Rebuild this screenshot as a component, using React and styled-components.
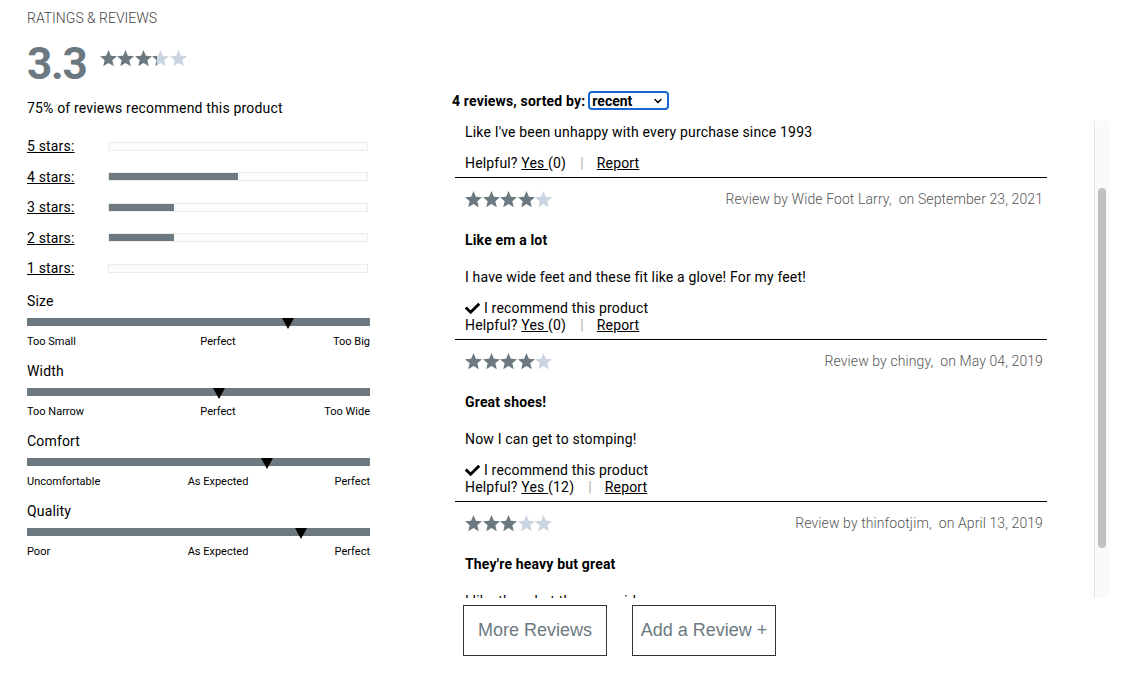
import React, { useId, useLayoutEffect, useRef, useState } from "react";
import styled, { createGlobalStyle } from "styled-components";
import { FaCheck } from "react-icons/fa";
import { ChevronDown } from "lucide-react";

const SLATE = "#6c7981";
const LIGHT = "#cbd4e1";

const GlobalStyle = createGlobalStyle`
  body {
    margin: 0;
    background: #fff;
    font-family: Roboto, "Liberation Sans", sans-serif;
    letter-spacing: 0.17px;
    color: #000;
  }
`;

const Page = styled.div`
  display: flex;
  align-items: flex-start;
  padding: 10px 0 0 27px;
  gap: 82px;
`;

const LeftCol = styled.div`
  width: 343px;
  display: flex;
  flex-direction: column;
`;

const Heading = styled.div`
  font-size: 14px;
  font-weight: 300;
  line-height: 17px;
  letter-spacing: 0;
  color: #444;
`;

const RatingRow = styled.div`
  display: flex;
  align-items: flex-start;
  margin-top: 14px;
`;

const BigNumber = styled.div`
  font-size: 44px;
  font-weight: 700;
  line-height: 46px;
  letter-spacing: -1.2px;
  color: ${SLATE};
`;

const StarRow = styled.div`
  display: flex;
  gap: ${(p) => p.$gap}px;
  margin: ${(p) => p.$margin || 0};
`;

const Text = styled.div`
  font-size: 14px;
  line-height: 17px;
  margin-top: ${(p) => p.$top || 0}px;
`;

const Breakdown = styled.div`
  display: flex;
  flex-direction: column;
  gap: 13.5px;
  margin-top: 21px;
`;

const BreakdownRow = styled.div`
  display: flex;
  align-items: center;
  height: 17px;
`;

const StarLink = styled.span`
  width: 81px;
  font-size: 14px;
  text-decoration: underline;
`;

const Bar = styled.div`
  width: 260px;
  height: 9px;
  box-sizing: border-box;
  border: 1px solid #ececec;
  background: #fcfcfc;
  display: flex;
`;

const BarFill = styled.div`
  height: 100%;
  background: ${SLATE};
`;

const Factors = styled.div`
  display: flex;
  flex-direction: column;
  gap: 15px;
  margin-top: 16px;
`;

const Factor = styled.div`
  display: flex;
  flex-direction: column;
`;

const FactorTrack = styled.div`
  position: relative;
  height: 8px;
  background: ${SLATE};
  margin-top: 8.5px;
`;

const Marker = styled.div`
  position: absolute;
  top: 0;
  width: 0;
  height: 0;
  transform: translateX(-6px);
  border-left: 6px solid transparent;
  border-right: 6px solid transparent;
  border-top: 11px solid #000;
`;

const FactorLabels = styled.div`
  display: grid;
  grid-template-columns: 120px 1fr 81px;
  margin-top: 8.5px;
  font-size: 11px;
  line-height: 13px;
  letter-spacing: 0;
  span:nth-child(2) { text-align: center; }
  span:nth-child(3) { text-align: right; }
`;

const RightCol = styled.div`
  width: 657px;
  padding-top: 81px;
  display: flex;
  flex-direction: column;
`;

const SortBar = styled.div`
  display: flex;
  align-items: center;
  height: 19px;
  font-size: 14px;
  font-weight: 700;
  gap: 3px;
`;

const SelectWrap = styled.div`
  position: relative;
  width: 81px;
  height: 19px;
`;

const Select = styled.select`
  appearance: none;
  width: 100%;
  height: 100%;
  box-sizing: border-box;
  border: 2px solid #1a66d3;
  border-radius: 4px;
  padding: 0 0 0 2px;
  background: #fff;
  font-family: Roboto, sans-serif;
  font-size: 14px;
  font-weight: 700;
  color: #000;
  outline: none;
`;

const Chevron = styled(ChevronDown)`
  position: absolute;
  right: 5px;
  top: 4px;
  pointer-events: none;
`;

const ListFrame = styled.div`
  display: flex;
  margin: 11px 0 0 3px;
  width: 654px;
  height: 477px;
`;

const ScrollArea = styled.div`
  flex: 1;
  height: 100%;
  overflow-y: scroll;
  scrollbar-width: none;
  &::-webkit-scrollbar { display: none; }
`;

const Track = styled.div`
  width: 15px;
  height: 100%;
  box-sizing: border-box;
  background: #fafafa;
  border-left: 1px solid #e6e6e6;
  padding: 0 3px 0 3px;
`;

const Thumb = styled.div`
  width: 8px;
  border-radius: 4px;
  background: #c1c1c1;
`;

const ReviewItem = styled.div`
  width: 592px;
  box-sizing: border-box;
  padding: 13px 4px 5px 10px;
  border-bottom: 1px solid #000;
  font-size: 14px;
  line-height: 17px;
`;

const ReviewTop = styled.div`
  display: flex;
  justify-content: space-between;
  align-items: center;
  height: 17px;
`;

const Reviewer = styled.span`
  font-weight: 300;
  color: #555;
  white-space: pre;
  letter-spacing: 0.1px;
`;

const Title = styled.div`
  font-weight: 700;
  margin-top: 24px;
`;

const Body = styled.div`
  margin-top: 20px;
`;

const Recommend = styled.div`
  display: flex;
  align-items: center;
  gap: 4px;
  margin-top: 14px;
`;

const Helpful = styled.div`
  margin-top: ${(p) => (p.$afterRecommend ? 0 : 14)}px;
`;

const U = styled.span`
  text-decoration: underline;
  white-space: pre;
`;

const Sep = styled.span`
  color: #aaa;
  margin: 0 13px 0 14px;
`;

const Buttons = styled.div`
  display: flex;
  gap: 25px;
  margin: 7px 0 0 11px;
`;

const Button = styled.button`
  width: 144px;
  height: 51px;
  background: #fff;
  border: 1px solid #333;
  font-family: "Liberation Sans", Arial, sans-serif;
  font-size: 18px;
  letter-spacing: 0;
  color: ${SLATE};
  padding: 0;
  cursor: pointer;
`;

const STAR_PATH =
  "M12 17.27L18.18 21l-1.64-7.03L22 9.24l-7.19-.61L12 2 9.19 8.63 2 9.24l5.46 4.73L5.82 21z";

const Stars = ({ rating, gap = 0.6, margin }) => {
  const id = useId().replace(/[^a-zA-Z0-9]/g, "");
  return (
    <StarRow $gap={gap} $margin={margin}>
      {[0, 1, 2, 3, 4].map((i) => {
        const f = Math.max(0, Math.min(1, rating - i));
        return (
          <svg key={i} width="17" height="16.2" viewBox="2 2 20 19">
            <defs>
              <linearGradient id={`${id}s${i}`}>
                <stop offset={f} stopColor={SLATE} />
                <stop offset={f} stopColor={LIGHT} />
              </linearGradient>
            </defs>
            <path d={STAR_PATH} fill={`url(#${id}s${i})`} />
          </svg>
        );
      })}
    </StarRow>
  );
};

const breakdown = [
  { stars: 5, pct: 0 },
  { stars: 4, pct: 50 },
  { stars: 3, pct: 25 },
  { stars: 2, pct: 25 },
  { stars: 1, pct: 0 },
];

const factors = [
  { name: "Size", pos: 76, labels: ["Too Small", "Perfect", "Too Big"] },
  { name: "Width", pos: 56, labels: ["Too Narrow", "Perfect", "Too Wide"] },
  { name: "Comfort", pos: 70, labels: ["Uncomfortable", "As Expected", "Perfect"] },
  { name: "Quality", pos: 80, labels: ["Poor", "As Expected", "Perfect"] },
];

const reviews = [
  {
    rating: 2,
    name: "grumpyguy",
    date: "January 12, 2022",
    title: "Not for me",
    body: "Like I've been unhappy with every purchase since 1993",
    recommend: false,
    helpful: 0,
  },
  {
    rating: 4,
    name: "Wide Foot Larry",
    date: "September 23, 2021",
    title: "Like em a lot",
    body: "I have wide feet and these fit like a glove! For my feet!",
    recommend: true,
    helpful: 0,
  },
  {
    rating: 4,
    name: "chingy",
    date: "May 04, 2019",
    title: "Great shoes!",
    body: "Now I can get to stomping!",
    recommend: true,
    helpful: 12,
  },
  {
    rating: 3,
    name: "thinfootjim",
    date: "April 13, 2019",
    title: "They're heavy but great",
    body: "I like them but they run wide",
    recommend: true,
    helpful: 3,
  },
];

const Review = ({ r }) => (
  <ReviewItem>
    <ReviewTop>
      <Stars rating={r.rating} />
      <Reviewer>{`Review by ${r.name},  on ${r.date}`}</Reviewer>
    </ReviewTop>
    <Title>{r.title}</Title>
    <Body>{r.body}</Body>
    {r.recommend && (
      <Recommend>
        <FaCheck size={15} />
        <span>I recommend this product</span>
      </Recommend>
    )}
    <Helpful $afterRecommend={r.recommend}>
      Helpful? <U>Yes </U>({r.helpful})<Sep>|</Sep>
      <U>Report</U>
    </Helpful>
  </ReviewItem>
);

const App = () => {
  const [sort, setSort] = useState("recent");
  const [thumb, setThumb] = useState({ top: 0, height: 0 });
  const listRef = useRef(null);

  const updateThumb = () => {
    const el = listRef.current;
    if (!el) return;
    const h = el.clientHeight;
    setThumb({
      top: (el.scrollTop / el.scrollHeight) * h,
      height: (h / el.scrollHeight) * h,
    });
  };

  useLayoutEffect(() => {
    if (listRef.current) listRef.current.scrollTop = 88;
    updateThumb();
  }, []);

  return (
    <>
      <GlobalStyle />
      <Page>
        <LeftCol>
          <Heading>RATINGS &amp; REVIEWS</Heading>
          <RatingRow>
            <BigNumber>3.3</BigNumber>
            <Stars rating={3.3} margin="8.5px 0 0 13px" />
          </RatingRow>
          <Text $top={12.5}>75% of reviews recommend this product</Text>
          <Breakdown>
            {breakdown.map((b) => (
              <BreakdownRow key={b.stars}>
                <StarLink>{b.stars} stars:</StarLink>
                <Bar>
                  <BarFill style={{ width: `${b.pct}%` }} />
                </Bar>
              </BreakdownRow>
            ))}
          </Breakdown>
          <Factors>
            {factors.map((f) => (
              <Factor key={f.name}>
                <Text>{f.name}</Text>
                <FactorTrack>
                  <Marker style={{ left: `${f.pos}%` }} />
                </FactorTrack>
                <FactorLabels>
                  {f.labels.map((l, i) => (
                    <span key={i}>{l}</span>
                  ))}
                </FactorLabels>
              </Factor>
            ))}
          </Factors>
        </LeftCol>

        <RightCol>
          <SortBar>
            <span>4 reviews, sorted by:</span>
            <SelectWrap>
              <Select value={sort} onChange={(e) => setSort(e.target.value)}>
                <option value="relevant">relevant</option>
                <option value="helpful">helpful</option>
                <option value="recent">recent</option>
              </Select>
              <Chevron size={12} strokeWidth={3} />
            </SelectWrap>
          </SortBar>
          <ListFrame>
            <ScrollArea ref={listRef} onScroll={updateThumb}>
              {reviews.map((r) => (
                <Review key={r.name} r={r} />
              ))}
            </ScrollArea>
            <Track>
              <Thumb style={{ marginTop: thumb.top, height: thumb.height }} />
            </Track>
          </ListFrame>
          <Buttons>
            <Button>More Reviews</Button>
            <Button>Add a Review +</Button>
          </Buttons>
        </RightCol>
      </Page>
    </>
  );
};

export default App;
